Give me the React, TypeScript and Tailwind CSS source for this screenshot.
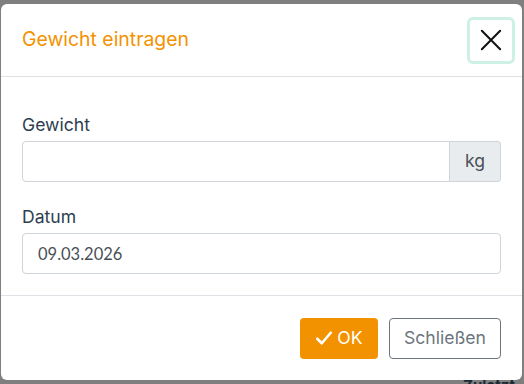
import React from 'react';

const font = { fontFamily: 'Inter, Lato, sans-serif' };

const App: React.FC = () => {
  return (
    <div className="relative w-[524px] h-[384px] overflow-hidden bg-[#7f7f7f]" style={font}>
      {/* page behind the backdrop */}
      <div className="absolute left-[463px] top-[377px] text-[15px] leading-[18px] font-bold text-[#1c2a36]">Zuletzt</div>

      <div className="absolute left-[1px] top-[4px] w-[521px] h-[376px] bg-white rounded-[6px] flex flex-col">
        <div className="h-[73px] flex items-center justify-between pl-[21px] pr-[7px] border-b border-[#dee2e6]">
          <h5 className="text-[19.4px] text-[#f39200]">Gewicht eintragen</h5>
          <button className="w-[48px] h-[47px] rounded-[6px] border-[3px] border-[#cdf1e3] flex items-center justify-center">
            <svg width="22" height="22" viewBox="0 0 24 24" fill="none" stroke="#111" strokeWidth="2.2" strokeLinecap="round">
              <path d="M2 2 L22 22 M22 2 L2 22" />
            </svg>
          </button>
        </div>

        <div className="flex-1 flex flex-col px-[21px] pt-[36px] border-b border-[#dee2e6]">
          <label className="text-[17.6px] leading-[24px] text-[#2c3e50] mb-[4px]">Gewicht</label>
          <div className="flex h-[41px] w-[479px]">
            <input className="flex-1 border border-[#ced4da] rounded-l-[4px] px-[14px] outline-none" />
            <span className="w-[51px] flex items-center justify-center bg-[#e9ecef] border border-l-0 border-[#ced4da] rounded-r-[4px] text-[17.6px] text-[#495057]">
              kg
            </span>
          </div>

          <label className="mt-[23px] text-[17.6px] leading-[24px] text-[#2c3e50] mb-[4px]">Datum</label>
          <input
            defaultValue="09.03.2026"
            className="h-[41px] w-[479px] border border-[#ced4da] rounded-[4px] px-[15px] font-['Lato',sans-serif] text-[16.5px] text-[#495057] outline-none"
          />
        </div>

        <div className="h-[84px] flex items-center justify-end gap-[11px] pr-[21px]">
          <button className="w-[78px] h-[41px] rounded-[4px] bg-[#f39200] text-white text-[17.6px] flex items-center justify-center gap-[4px]">
            <svg width="18" height="18" viewBox="0 0 24 24" fill="none" stroke="white" strokeWidth="3.5" strokeLinecap="round" strokeLinejoin="round">
              <path d="M3 13 L9 19 L21 5" />
            </svg>
            OK
          </button>
          <button className="w-[112px] h-[41px] rounded-[4px] border border-[#6c757d] text-[#6c757d] text-[17.6px]">
            Schließen
          </button>
        </div>
      </div>
    </div>
  );
};

export default App;
